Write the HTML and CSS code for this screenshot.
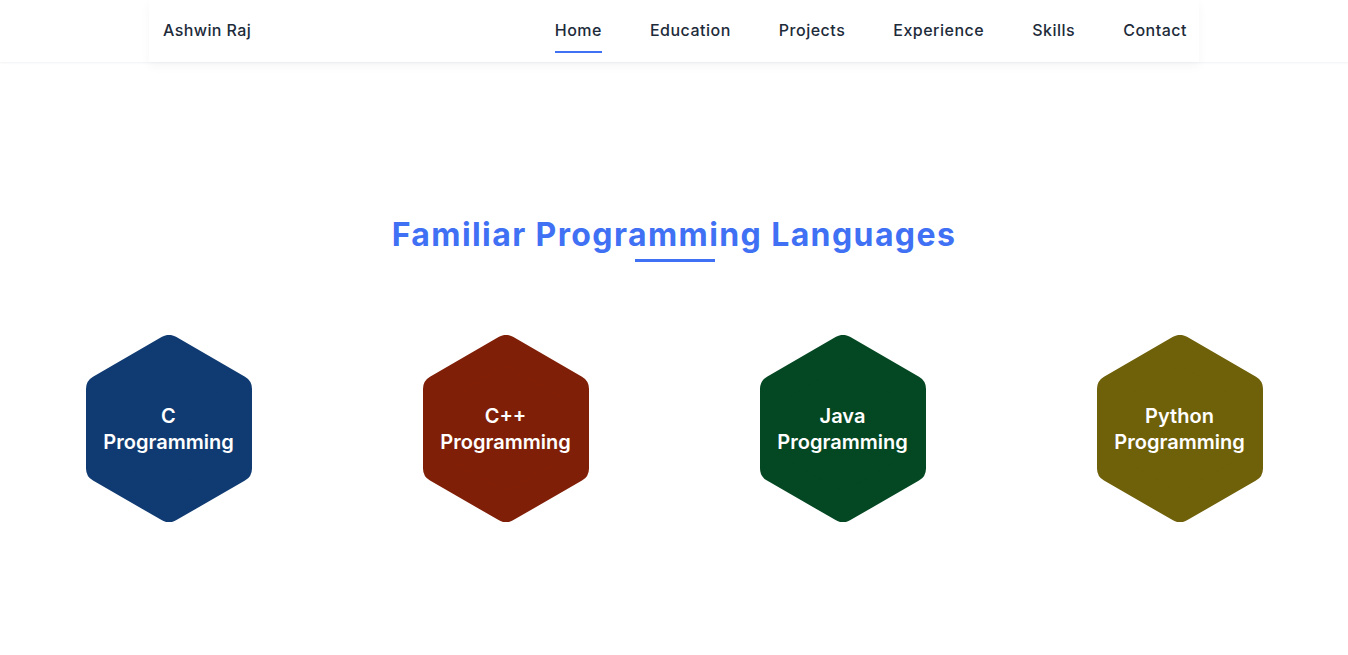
FILE: index.html
```html
<!DOCTYPE html>
<html lang="en">
<head>
<meta charset="utf-8">
<title>Ashwin Raj</title>
<link rel="stylesheet" href="styles.css">
</head>
<body>
<header class="header">
  <div class="header-inner">
    <a class="brand" href="#">Ashwin Raj</a>
    <nav class="nav">
      <a class="nav-link active" href="#">Home</a>
      <a class="nav-link" href="#">Education</a>
      <a class="nav-link" href="#">Projects</a>
      <a class="nav-link" href="#">Experience</a>
      <a class="nav-link" href="#">Skills</a>
      <a class="nav-link" href="#">Contact</a>
    </nav>
  </div>
</header>
<main class="skills">
  <h2 class="section-title">Familiar Programming Languages</h2>
  <div class="title-bar"></div>
  <div class="hex-row">
    <div class="hex-cell">
      <div class="hex hex-c">
        <svg class="hex-shape" viewBox="0 0 166 187" aria-hidden="true"><polygon points="83,14 152,53.8 152,133.4 83,173.2 14,133.4 14,53.8"/></svg>
        <span class="hex-text">C<br>Programming</span>
      </div>
    </div>
    <div class="hex-cell">
      <div class="hex hex-cpp">
        <svg class="hex-shape" viewBox="0 0 166 187" aria-hidden="true"><polygon points="83,14 152,53.8 152,133.4 83,173.2 14,133.4 14,53.8"/></svg>
        <span class="hex-text">C++<br>Programming</span>
      </div>
    </div>
    <div class="hex-cell">
      <div class="hex hex-java">
        <svg class="hex-shape" viewBox="0 0 166 187" aria-hidden="true"><polygon points="83,14 152,53.8 152,133.4 83,173.2 14,133.4 14,53.8"/></svg>
        <span class="hex-text">Java<br>Programming</span>
      </div>
    </div>
    <div class="hex-cell">
      <div class="hex hex-py">
        <svg class="hex-shape" viewBox="0 0 166 187" aria-hidden="true"><polygon points="83,14 152,53.8 152,133.4 83,173.2 14,133.4 14,53.8"/></svg>
        <span class="hex-text">Python<br>Programming</span>
      </div>
    </div>
  </div>
</main>
</body>
</html>
```
FILE: styles.css
```css
* { box-sizing: border-box; }
html, body { margin: 0; padding: 0; background: #fff; }
body { font-family: Inter, "Noto Sans", sans-serif; color: #1d2b3a; }

.header {
  height: 62px;
  background: #fff;
  box-shadow: 0 1px 2px rgba(20, 30, 60, 0.06);
  position: relative;
  z-index: 2;
}
.header-inner {
  width: 1050px;
  height: 62px;
  margin: 0 auto;
  padding: 0 12px 0 14px;
  display: flex;
  align-items: center;
  justify-content: space-between;
  box-shadow: 0 4px 10px rgba(20, 30, 60, 0.04);
}
.brand {
  font-size: 16px;
  font-weight: 500;
  color: #1d2b3a;
  text-decoration: none;
  letter-spacing: 0.4px;
  padding-bottom: 2px;
}
.nav {
  display: flex;
  gap: 48px;
  height: 62px;
  align-items: center;
  padding-bottom: 2px;
}
.nav-link {
  position: relative;
  font-size: 16px;
  font-weight: 500;
  color: #1d2b3a;
  text-decoration: none;
  letter-spacing: 0.5px;
}
.nav-link.active::after {
  content: "";
  position: absolute;
  left: 0; right: 0;
  top: 31px;
  height: 2px;
  background: #4070f4;
}

.skills { padding-top: 154px; }
.section-title {
  margin: 0;
  text-align: center;
  font-size: 32px;
  line-height: 38px;
  font-weight: 700;
  color: #4070f4;
  letter-spacing: 1.4px;
}
.title-bar {
  width: 80px;
  height: 3px;
  background: #4070f4;
  margin: 5px auto 0;
  position: relative;
  left: 1px;
}
.hex-row {
  display: grid;
  grid-template-columns: repeat(4, 1fr);
  margin-top: 73px;
}
.hex-cell { display: flex; justify-content: center; }
.hex {
  position: relative;
  width: 166px;
  height: 187px;
  display: flex;
  align-items: center;
  justify-content: center;
}
.hex-shape {
  position: absolute;
  inset: 0;
  width: 100%;
  height: 100%;
}
.hex-shape polygon { stroke-width: 28; stroke-linejoin: round; }
.hex-c .hex-shape polygon { fill: #103b72; stroke: #103b72; }
.hex-cpp .hex-shape polygon { fill: #801f07; stroke: #801f07; }
.hex-java .hex-shape polygon { fill: #044823; stroke: #044823; }
.hex-py .hex-shape polygon { fill: #6f600a; stroke: #6f600a; }
.hex-text {
  position: relative;
  color: #fff;
  font-size: 20px;
  line-height: 26px;
  font-weight: 600;
  text-align: center;
  letter-spacing: 0;
}
```
